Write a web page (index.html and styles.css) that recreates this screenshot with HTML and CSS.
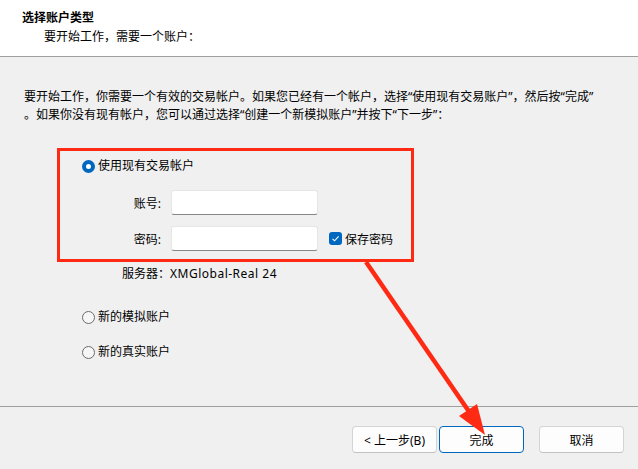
FILE: index.html
```html
<!DOCTYPE html>
<html lang="zh-CN">
<head>
    <meta charset="UTF-8">
    <title>选择账户类型</title>
    <link rel="stylesheet" href="styles.css">
</head>
<body>
    <div class="page">
        <div class="header">
            <div class="title">选择账户类型</div>
            <div class="subtitle">要开始工作，需要一个账户：</div>
        </div>

        <div class="content">
            <p class="intro">要开始工作，你需要一个有效的交易帐户。如果您已经有一个帐户，选择“使用现有交易账户”，然后按“完成”<br>。如果你没有现有帐户，您可以通过选择“创建一个新模拟账户”并按下“下一步”：</p>

            <div class="option first">
                <span class="radio checked"></span>
                <span>使用现有交易帐户</span>
            </div>

            <div class="field">
                <label class="field-label">账号:</label>
                <div class="input"></div>
            </div>
            <div class="field second">
                <label class="field-label">密码:</label>
                <div class="input"></div>
                <span class="checkbox">
                    <svg width="13" height="13" viewBox="0 0 13 13"><path d="M3.5 6.8 L5.6 8.8 L9.6 4.4" fill="none" stroke="#fff" stroke-width="1.1"/></svg>
                </span>
                <span class="check-text">保存密码</span>
            </div>

            <div class="server">服务器：<span class="server-name">XMGlobal-Real 24</span></div>

            <div class="option demo">
                <span class="radio"></span>
                <span>新的模拟账户</span>
            </div>
            <div class="option real">
                <span class="radio"></span>
                <span>新的真实账户</span>
            </div>
        </div>

        <div class="footer">
            <button class="btn">&lt; 上一步(B)</button>
            <button class="btn primary">完成</button>
            <button class="btn cancel">取消</button>
        </div>

        <!-- annotation on top of the dialog -->
        <div class="mark-box"></div>
        <svg class="mark-arrow" width="638" height="469" viewBox="0 0 638 469">
            <line x1="366" y1="262" x2="470" y2="413" stroke="#ff2a14" stroke-width="4.5"/>
            <polygon points="485,435 477,404 459,416" fill="#ff2a14"/>
        </svg>
    </div>
</body>
</html>
```

FILE: styles.css
```css
body {
    margin: 0;
    font-family: "Noto Sans", "Noto Sans CJK SC", sans-serif;
    font-size: 12px;
    color: #000;
    background: #f0f0f0;
}

.page {
    position: relative;
    width: 638px;
    height: 469px;
    overflow: hidden;
    display: flex;
    flex-direction: column;
}

.header {
    height: 57px;
    background: #fff;
    border-bottom: 1px solid #a0a0a0;
    padding: 10px 0 0 22px;
    box-sizing: border-box;
    flex: none;
}

.title {
    font-weight: bold;
    line-height: 16px;
}

.subtitle {
    line-height: 16px;
    margin: 3px 0 0 22px;
}

.content {
    height: 349px;
    flex: none;
    display: flex;
    flex-direction: column;
}

.intro {
    margin: 31px 0 0 24px;
    line-height: 18px;
    white-space: nowrap;
}

.option {
    display: flex;
    align-items: center;
    gap: 3px;
    padding-left: 82px;
    line-height: 18px;
}

.option.first {
    margin-top: 33px;
}

.option.demo {
    margin-top: 25px;
}

.option.real {
    margin-top: 17px;
}

.radio {
    width: 13px;
    height: 13px;
    border-radius: 50%;
    box-sizing: border-box;
    border: 1px solid #6b6b6b;
    background: #f6f6f6;
}

.radio.checked {
    border: 4px solid #0067c0;
    background: #fff;
}

.field {
    display: flex;
    align-items: center;
    padding-left: 122px;
    margin-top: 15px;
    height: 25px;
}

.field.second {
    margin-top: 11px;
}

.field-label {
    width: 39px;
    text-align: right;
    margin-right: 10px;
}

.input {
    width: 147px;
    height: 25px;
    box-sizing: border-box;
    background: #fff;
    border: 1px solid #e6e6e6;
    border-bottom-color: #858585;
    border-radius: 3px;
}

.checkbox {
    width: 13px;
    height: 13px;
    margin-left: 11px;
    background: #0067c0;
    border-radius: 3px;
    display: flex;
}

.check-text {
    margin-left: 3px;
}

.server {
    margin: 14px 0 0 122px;
    line-height: 18px;
}

.server-name {
    letter-spacing: 0.5px;
}

.footer {
    flex: 1;
    border-top: 1px solid #a0a0a0;
    display: flex;
    align-items: flex-start;
    justify-content: flex-end;
    padding: 19px 14px 0 0;
}

.btn {
    width: 85px;
    height: 27px;
    font-family: "Noto Sans", "Noto Sans CJK SC", sans-serif;
    font-size: 12px;
    color: #000;
    background: #fdfdfd;
    border: 1px solid #d4d4d4;
    border-bottom-color: #c2c2c2;
    border-radius: 4px;
    padding: 0;
}

.btn.primary {
    margin-left: 2px;
    border: 1px solid #0067c0;
}

.btn.cancel {
    margin-left: 15px;
}

.mark-box {
    position: absolute;
    left: 57px;
    top: 148px;
    width: 357px;
    height: 114px;
    box-sizing: border-box;
    border: 3px solid #ff2a14;
}

.mark-arrow {
    position: absolute;
    left: 0;
    top: 0;
    pointer-events: none;
}
```
